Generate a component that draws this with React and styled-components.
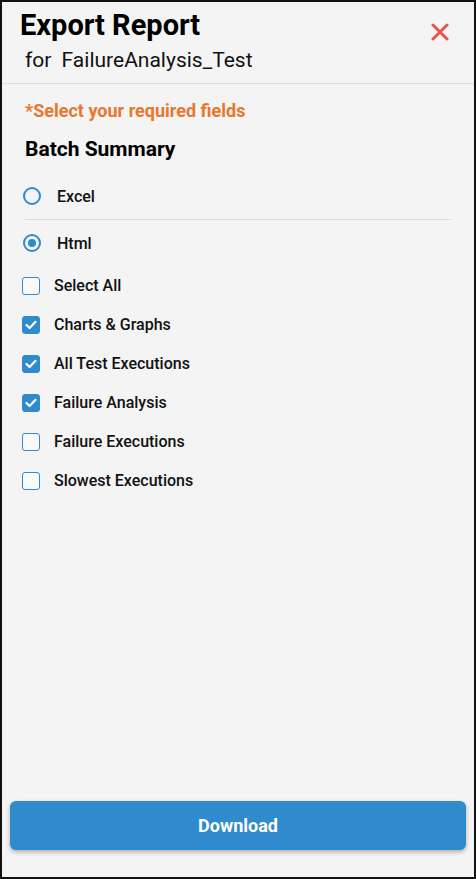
import styled, { createGlobalStyle } from "styled-components";

const GlobalStyle = createGlobalStyle`
  * { box-sizing: border-box; }
  body {
    margin: 0;
    font-family: Roboto, "Liberation Sans", sans-serif;
    background: #ffffff;
  }
`;

const options = [
  { label: "Select All", checked: false },
  { label: "Charts & Graphs", checked: true },
  { label: "All Test Executions", checked: true },
  { label: "Failure Analysis", checked: true },
  { label: "Failure Executions", checked: false },
  { label: "Slowest Executions", checked: false },
];

const CloseIcon = () => (
  <svg width="18" height="18" viewBox="0 0 18 18">
    <path d="M2 2 L16 16 M16 2 L2 16" stroke="#e85450" strokeWidth="3" strokeLinecap="round" />
  </svg>
);

const CheckMark = () => (
  <svg width="12" height="10" viewBox="0 0 12 10">
    <path d="M1.5 5 L4.6 8 L10.5 1.8" stroke="#fff" strokeWidth="2.2" fill="none" strokeLinecap="round" strokeLinejoin="round" />
  </svg>
);

export default function App() {
  return (
    <>
      <GlobalStyle />
      <Panel>
        <Header>
          <div>
            <Title>Export Report</Title>
            <Subtitle>
              for <span>FailureAnalysis_Test</span>
            </Subtitle>
          </div>
          <CloseButton aria-label="close">
            <CloseIcon />
          </CloseButton>
        </Header>

        <Body>
          <Required>*Select your required fields</Required>
          <Section>Batch Summary</Section>

          <RadioGroup>
            <RadioRow>
              <Radio />
              <RadioLabel>Excel</RadioLabel>
            </RadioRow>
            <Divider />
            <RadioRow>
              <Radio checked />
              <RadioLabel>Html</RadioLabel>
            </RadioRow>
          </RadioGroup>

          <CheckList>
            {options.map((o) => (
              <CheckRow key={o.label}>
                <Box checked={o.checked}>{o.checked && <CheckMark />}</Box>
                <CheckLabel>{o.label}</CheckLabel>
              </CheckRow>
            ))}
          </CheckList>
        </Body>

        <Footer>
          <DownloadButton>Download</DownloadButton>
        </Footer>
      </Panel>
    </>
  );
}

const Panel = styled.div`
  width: 476px;
  height: 879px;
  border: 2px solid #111;
  background: #f4f4f4;
  display: flex;
  flex-direction: column;
`;

const Header = styled.div`
  display: flex;
  justify-content: space-between;
  align-items: flex-start;
  padding: 5px 25px 11px 18px;
  border-bottom: 1px solid #dcdcdc;
`;

const Title = styled.h1`
  margin: 0;
  font-size: 29px;
  font-weight: 700;
  color: #000;
  line-height: 36px;
`;

const Subtitle = styled.div`
  margin: 5px 0 0 5px;
  font-size: 21px;
  line-height: 24px;
  color: #111;
  span {
    margin-left: 5px;
  }
`;

const CloseButton = styled.button`
  border: none;
  background: none;
  padding: 0;
  margin-top: 16px;
  cursor: pointer;
  display: flex;
`;

const Body = styled.div`
  flex: 1;
  padding: 16px 23px 0 20px;
`;

const Required = styled.div`
  font-size: 18px;
  line-height: 22px;
  font-weight: 700;
  color: #e8772e;
  padding-left: 3px;
`;

const Section = styled.h2`
  margin: 15px 0 0 3px;
  font-size: 21px;
  line-height: 24px;
  font-weight: 700;
  color: #000;
`;

const RadioGroup = styled.div`
  margin-top: 12px;
`;

const RadioRow = styled.div`
  display: flex;
  align-items: center;
  gap: 16px;
  padding-left: 1px;
  height: 46px;
  & + & {
    padding-top: 4px;
  }
`;

const Radio = styled.span`
  width: 18px;
  height: 18px;
  border-radius: 50%;
  border: 2px solid #2f8bcc;
  display: flex;
  align-items: center;
  justify-content: center;
  &::after {
    content: "";
    width: 8px;
    height: 8px;
    border-radius: 50%;
    background: ${(p) => (p.checked ? "#2f8bcc" : "transparent")};
  }
`;

const RadioLabel = styled.span`
  font-size: 16px;
  font-weight: 500;
  color: #111;
`;

const Divider = styled.hr`
  margin: 0 0 0 3px;
  border: none;
  border-top: 1px solid #dcdcdc;
`;

const CheckList = styled.div`
  display: flex;
  flex-direction: column;
`;

const CheckRow = styled.div`
  display: flex;
  align-items: center;
  gap: 14px;
  height: 39px;
`;

const Box = styled.span`
  width: 18px;
  height: 18px;
  border-radius: 3px;
  border: 1.5px solid #2f8bcc;
  background: ${(p) => (p.checked ? "#2f8bcc" : "#fafafa")};
  display: flex;
  align-items: center;
  justify-content: center;
`;

const CheckLabel = styled.span`
  font-size: 16px;
  font-weight: 500;
  color: #111;
`;

const Footer = styled.div`
  padding: 0 8px 27px;
`;

const DownloadButton = styled.button`
  width: 100%;
  height: 49px;
  border: none;
  border-radius: 6px;
  background: #2f8bcc;
  color: #fff;
  font-family: Roboto, "Liberation Sans", sans-serif;
  font-size: 18px;
  font-weight: 700;
  box-shadow: 0 2px 4px rgba(0, 0, 0, 0.3);
  cursor: pointer;
`;
